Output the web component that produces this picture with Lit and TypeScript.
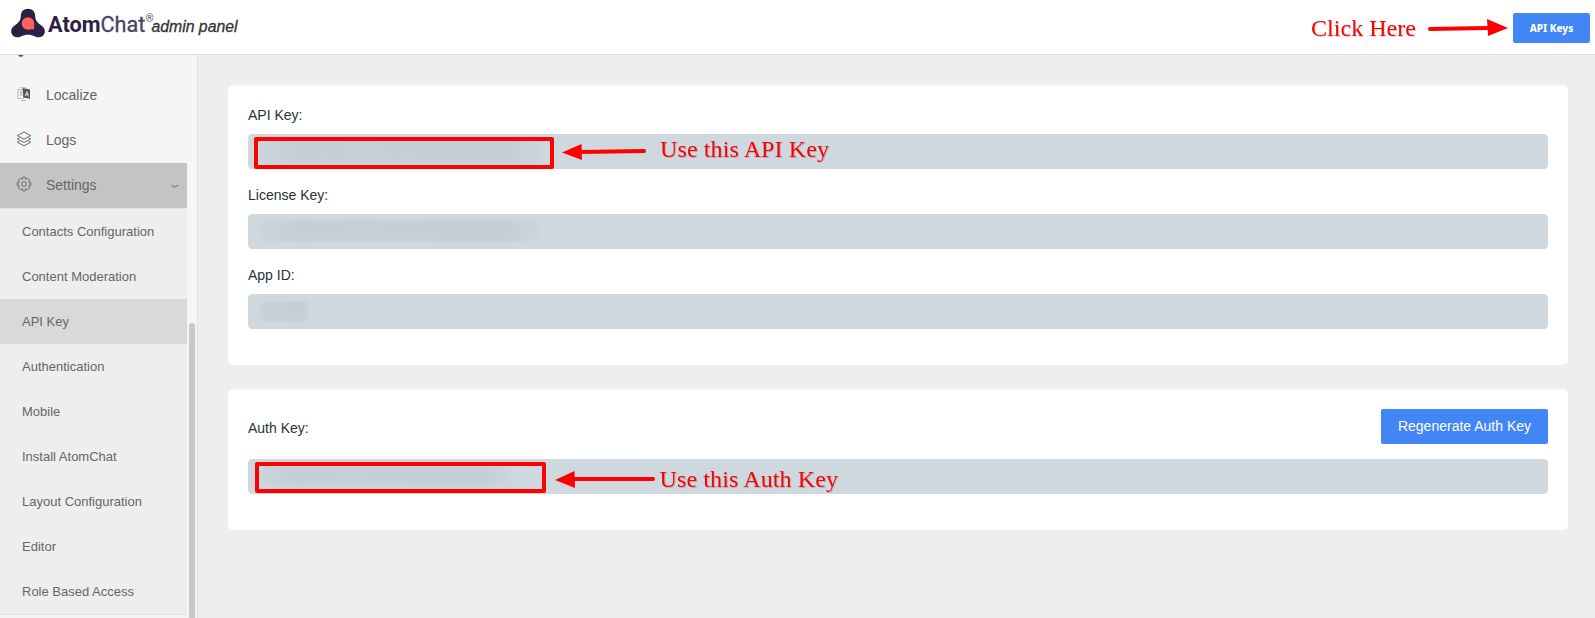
import { LitElement, html, css, svg } from "lit";
import { customElement } from "lit/decorators.js";

const SUB_ITEMS = [
  "Contacts Configuration", "Content Moderation", "API Key", "Authentication", "Mobile",
  "Install AtomChat", "Layout Configuration", "Editor", "Role Based Access",
];

const chevron = svg`<path d="M.6 1.200L3.800 3.200L7.200 1" fill="none" stroke="#666" stroke-width="1"/>`;

function gearPath(cx: number, cy: number, inner: number, outer: number, teeth: number): string {
  const points: string[] = [];
  for (let i = 0; i < teeth; i++) {
    const a = (i * 2 * Math.PI) / teeth - Math.PI / 2;
    for (const [da, r] of [[-0.3, inner], [-0.19, outer], [0.19, outer], [0.3, inner]]) {
      points.push(`${(cx + r * Math.cos(a + da)).toFixed(2)} ${(cy + r * Math.sin(a + da)).toFixed(2)}`);
    }
  }
  return `M${points.join("L")}Z`;
}

@customElement("admin-header")
class AdminHeader extends LitElement {
  static styles = css`
    :host { display: flex; height: 54px; flex: none; background: #fff; border-bottom: 1px solid #e0e0e0; justify-content: space-between; }
    svg { display: block; }
    .brand { display: flex; padding: 8px 0 0 11px; }
    .name { font: 700 21.7px/33px Roboto, sans-serif; color: #2b2143; padding-left: 3px; white-space: nowrap; }
    .light { font-weight: 400; color: #4b4360; -webkit-text-stroke: 0.3px #4b4360; }
    .reg { font: 400 10.5px/16px Roboto, sans-serif; color: #555; padding-top: 3px; width: 6px; }
    .panel { font: italic 400 15.8px/20px "Liberation Sans", sans-serif; color: #333; padding-top: 9px; white-space: nowrap; -webkit-text-stroke: 0.3px #333; }
    .actions { display: flex; padding: 13px 5px 0 0; }
    .btn { box-sizing: border-box; width: 77px; height: 30px; border: 0; border-radius: 2px; background: #4285f4; color: #fff; font: 800 10px/29px "Noto Sans", sans-serif; padding: 0; text-align: center; }
  `;
  render() {
    return html`
      <div class="brand">
        <svg width="34" height="31" viewBox="0 0 34 31">
          <path d="M17 .7C12.500 .7 9.800 3.800 9.800 8C9.800 12 8 14.700 4.600 16.700C.5 19.200 -.8 22.800 .8 26C2.500 29.500 6.500 30 10 28.400C14.500 26.300 19.500 26.300 24 28.400C27.500 30 31.500 29.500 33.200 26C34.800 22.800 33.500 19.200 29.400 16.700C26 14.700 24.200 12 24.200 8C24.200 3.800 21.500 .7 17 .7Z" fill="#2b2143"/>
          <circle cx="17" cy="15.500" r="6.200" fill="#ff6161"/>
          <path d="M17 15.500h6.100V21.300H17Z" fill="#ff6161"/>
        </svg>
        <span class="name">Atom<span class="light">Chat</span></span>
        <span class="reg">®</span>
        <span class="panel">admin panel</span>
      </div>
      <div class="actions"><button class="btn">API Keys</button></div>
    `;
  }
}

@customElement("admin-sidebar")
class AdminSidebar extends LitElement {
  static styles = css`
    :host { display: flex; box-sizing: border-box; width: 198px; flex: none; background: #f5f5f5; border-right: 1px solid #e0e0e0; overflow: hidden; font: 14px "Liberation Sans", sans-serif; color: #666; }
    svg { display: block; flex: none; }
    .list { width: 187px; flex: none; }
    .peek { height: 18px; padding-left: 18px; }
    .item { display: flex; align-items: center; height: 45px; box-sizing: border-box; padding: 0 8px 3px 16px; }
    .item span { flex: 1; padding: 1px 0 0 14px; line-height: 16px; font-size: 14px; }
    .item .wide { padding-left: 13px; }
    .open { background: #c4c4c4; }
    .sub { background: #eee; border-top: 1px solid #e2e2e2; border-bottom: 1px solid #e0e0e0; }
    .entry { height: 45px; line-height: 45px; padding-left: 22px; font-size: 13px; white-space: nowrap; }
    .active { background: #d9d9d9; }
    .track { padding: 268px 0 0 2px; width: 6px; }
    .thumb { height: 400px; background: #c9c9c9; border-radius: 3px; }
    .down { margin-top: 3px; }
  `;
  render() {
    return html`
      <div class="list">
        <div class="peek"><svg width="6" height="2" viewBox="0 0 6 2"><path d="M0 0h5.500L4 1.800H1.500Z" fill="#555"/></svg></div>
        <div class="item">
          <svg width="17" height="16" viewBox="0 0 17 16">
            <path d="M2 3.500h5.500v9H2zM4.500 1.500h5M5 14.500h5" fill="#fafafa" stroke="#aaa" stroke-width=".8"/>
            <path d="M3.500 6h3M5 4.800v1.200M3.700 10L6.200 6M4 7l2.500 3" fill="none" stroke="#999" stroke-width=".7"/>
            <path d="M6.500 2L14 3.500v9.300L7.500 11.500Z" fill="#555"/>
            <path d="M9.200 10L10.900 5.600L12.600 10.600M9.800 8.700h2.200" fill="none" stroke="#eee" stroke-width=".9"/>
          </svg><span class="wide">Localize</span>
        </div>
        <div class="item">
          <svg width="16" height="16" viewBox="0 0 16 16" fill="none" stroke="#666" stroke-width="1" stroke-linejoin="round">
            <path d="M8 1L14.700 4.600L8 8.200L1.300 4.600ZM3.200 6.800L1.300 7.900L8 11.500L14.700 7.900L12.800 6.800M3.200 10.100L1.300 11.200L8 14.800L14.700 11.200L12.800 10.100"/>
          </svg><span>Logs</span>
        </div>
        <div class="item open">
          <svg width="16" height="16" viewBox="0 0 16 16" fill="none" stroke="#666" stroke-width="1" stroke-linejoin="round">
            <path d=${gearPath(8, 8, 5.2, 6.9, 8)}/><circle cx="8" cy="8" r="2.300"/>
          </svg><span>Settings</span>
          <svg class="down" width="8" height="4" viewBox="0 0 8 4">${chevron}</svg>
        </div>
        <div class="sub">${SUB_ITEMS.map((t) => html`<div class="entry ${t === "API Key" ? "active" : ""}">${t}</div>`)}</div>
      </div>
      <div class="track"><div class="thumb"></div></div>
    `;
  }
}

@customElement("app-root")
class AppRoot extends LitElement {
  static styles = css`
    :host { display: flex; flex-direction: column; position: relative; width: 1595px; height: 618px; overflow: hidden; background: #eee; font: 14px "Liberation Sans", sans-serif; color: #263238; }
    .body { display: flex; flex: 1; min-height: 0; }
    .main { flex: 1; padding: 30px 27px 0 30px; display: flex; flex-direction: column; gap: 24px; background: #eee; }
    .card { background: #fff; border-radius: 5px; padding: 20px; box-sizing: border-box; }
    .keys { height: 280px; }
    .auth { height: 141px; }
    .label { height: 29px; line-height: 20px; font-size: 14px; }
    .field { box-sizing: border-box; height: 35px; border: 1px solid #d5d8d8; border-radius: 4px; background: #cfd8df; margin-bottom: 16px; padding: 4px 0 0 10px; }
    .smudge { height: 23px; border-radius: 1px; background: linear-gradient(90deg, #cbd5dc, #c4cfd5 14%, #c6d1d7 35%, #c4cfd5 65%, #c4cfd5 88%, #cdd6dd); box-shadow: inset 0 0 8px 1px rgba(207, 216, 223, 0.6); }
    .w1 { width: 286px; height: 25px; } .w2 { width: 282px; } .w3 { width: 51px; height: 21px; margin-top: 2px; } .w4 { width: 255px; }
    .row { display: flex; justify-content: space-between; height: 50px; }
    .row .label { padding-top: 9px; }
    .regen { width: 167px; height: 35px; border: 0; border-radius: 2px; background: #4285f4; color: #fff; font: 14px/35px "Liberation Sans", sans-serif; padding: 0; }
    .notes { position: absolute; left: 0; top: 0; pointer-events: none; }
    .notes text { font: 24px "Liberation Serif", serif; fill: #f00; }
    .shadow { filter: drop-shadow(1px 1px 0.5px rgba(0, 0, 0, 0.16)); }
  `;
  render() {
    return html`
      <admin-header></admin-header>
      <div class="body">
        <admin-sidebar></admin-sidebar>
        <div class="main">
          <div class="card keys">
            <div class="label">API Key:</div><div class="field"><div class="smudge w1"></div></div>
            <div class="label">License Key:</div><div class="field"><div class="smudge w2"></div></div>
            <div class="label">App ID:</div><div class="field"><div class="smudge w3"></div></div>
          </div>
          <div class="card auth">
            <div class="row"><div class="label">Auth Key:</div><button class="regen">Regenerate Auth Key</button></div>
            <div class="field"><div class="smudge w4"></div></div>
          </div>
        </div>
      </div>
      <svg class="notes" width="1595" height="618" viewBox="0 0 1595 618">
        <g fill="none" stroke="#f00" stroke-width="4" stroke-linecap="round" stroke-linejoin="round">
          <rect x="256" y="139" width="296" height="28"/>
          <rect x="257" y="464" width="287" height="27"/>
          <path d="M1430 29L1488 28M644 151L580 152M653 479H573"/>
        </g>
        <g fill="#f00">
          <path d="M1487 19L1508 28L1488 36ZM581.500 144L562 152.500L582 160ZM574.500 471L555 480L575 488Z"/>
        </g>
        <g class="shadow">
          <text x="1311" y="36" textLength="105">Click Here</text>
          <text x="660" y="157" textLength="169">Use this API Key</text>
          <text x="659.500" y="487" textLength="178.500">Use this Auth Key</text>
        </g>
      </svg>
    `;
  }
}
